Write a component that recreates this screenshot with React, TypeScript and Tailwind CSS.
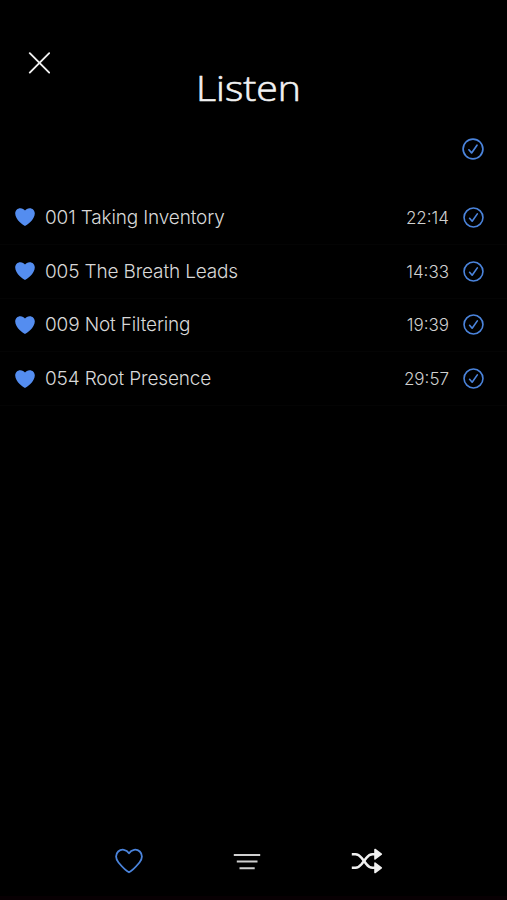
interface Track {
  title: string;
  duration: string;
}

interface IconProps {
  className?: string;
}

const tracks: Track[] = [
  { title: '001 Taking Inventory', duration: '22:14' },
  { title: '005 The Breath Leads', duration: '14:33' },
  { title: '009 Not Filtering', duration: '19:39' },
  { title: '054 Root Presence', duration: '29:57' },
];

const CloseIcon = () => (
  <svg viewBox="0 0 22 22" className="h-[22px] w-[22px]" fill="none" stroke="#f2f2f2" strokeWidth="1.9" strokeLinecap="round">
    <path d="M1.8 1.2 21.2 20.600M21.2 1.2 1.8 20.600" />
  </svg>
);

const CheckCircle = ({ className = '' }: IconProps) => (
  <svg viewBox="0 0 22 22" className={className} fill="none" stroke="#4b84dc" strokeWidth="1.7" strokeLinecap="round" strokeLinejoin="round">
    <circle cx="11" cy="11" r="9.9" />
    <path d="M6.9 11.8 9.6 14.9 15 7.2" />
  </svg>
);

const HeartSolid = () => (
  <svg viewBox="0 0 20 18" className="h-[18px] w-5" fill="#548df0">
    <path d="M10 18C8.800 17.600.2 12 .2 5.600.2 2.400 2.500.2 5.300.2 7.400.2 9.100 1.200 10 2.600 10.900 1.200 12.600.2 14.700.2 17.500.2 19.800 2.400 19.800 5.600 19.800 12 11.200 17.600 10 18Z" />
  </svg>
);

const HeartOutline = () => (
  <svg viewBox="0 0 28 26" className="h-[26px] w-7" fill="none" stroke="#4b84dc" strokeWidth="1.8" strokeLinejoin="round">
    <path d="M14 24.300C12.500 23.600 7.300 19 3.500 14.500.3 10.700.4 6.200 3.200 3.500 6.400.6 11.500 1.200 14 5.300 16.500 1.200 21.600.6 24.800 3.500 27.600 6.200 27.700 10.700 24.500 14.500 20.700 19 15.500 23.600 14 24.300Z" />
  </svg>
);

const SortIcon = () => (
  <svg viewBox="0 0 28 18" className="h-[18px] w-7" fill="none" stroke="#d0d0d0" strokeWidth="2">
    <path d="M.8 2.900H27.200M3.800 9.500H24.500M6.500 16.200H21.700" />
  </svg>
);

const ShuffleIcon = () => (
  <svg viewBox="0 0 32 26" className="h-[26px] w-8" fill="none" stroke="#f0f0f0" strokeWidth="2.600">
    <path d="M.8 6.200H4.500C7.300 6.200 8.700 7.600 10.700 10L15.300 16C17.300 18.600 18.700 19.800 21.500 19.800H25" />
    <path d="M.8 19.800H4.500C7.300 19.800 8.700 18.400 10.700 16L15.300 10C17.300 7.400 18.700 6.200 21.500 6.200H25" />
    <path d="M24 1.500 30.300 6.200 24 10.900ZM24 15.100 30.300 19.800 24 24.500Z" fill="#f0f0f0" strokeWidth="1.600" strokeLinejoin="round" />
  </svg>
);

const TrackRow = ({ title, duration }: Track) => (
  <li className="flex h-[53.8px] items-center border-b border-[#040404] pl-[15px] pr-[23px]">
    <HeartSolid />
    <span className="ml-[10px] flex-1 pt-px text-[19px] font-light leading-6 tracking-[-0.15px] text-[#d8d8d8]">{title}</span>
    <span className="mr-[14px] pt-px text-[17px] font-light leading-6 text-[#d0d0d0]">{duration}</span>
    <CheckCircle className="h-[21px] w-[21px]" />
  </li>
);

const App = () => {
  return (
    <div className="flex h-[900px] w-full flex-col bg-black font-['Inter',sans-serif]">
      <header className="flex flex-col px-7 pt-[52px]">
        <button type="button" aria-label="Close" className="self-start">
          <CloseIcon />
        </button>
        <h1 className="-mt-[10px] h-12 translate-x-[-5px] scale-x-[1.12] text-center font-['Open_Sans',sans-serif] text-[35px] font-light leading-[48px] text-[#f2f2f2] [-webkit-text-stroke:0.6px_#f2f2f2]">
          Listen
        </h1>
      </header>

      <div className="mt-[26px] flex justify-end pr-[23px]">
        <CheckCircle className="h-[22px] w-[22px]" />
      </div>

      <ul className="mt-[31px] flex-1">
        {tracks.map((track) => (
          <TrackRow key={track.title} {...track} />
        ))}
      </ul>

      <nav className="flex h-[70px] items-center pl-[115px]">
        <button type="button" aria-label="Favorites">
          <HeartOutline />
        </button>
        <button type="button" aria-label="Sort" className="ml-[90px]">
          <SortIcon />
        </button>
        <button type="button" aria-label="Shuffle" className="ml-[90px]">
          <ShuffleIcon />
        </button>
      </nav>
      <div className="h-1 bg-[#080003]" />
    </div>
  );
};

export default App;
